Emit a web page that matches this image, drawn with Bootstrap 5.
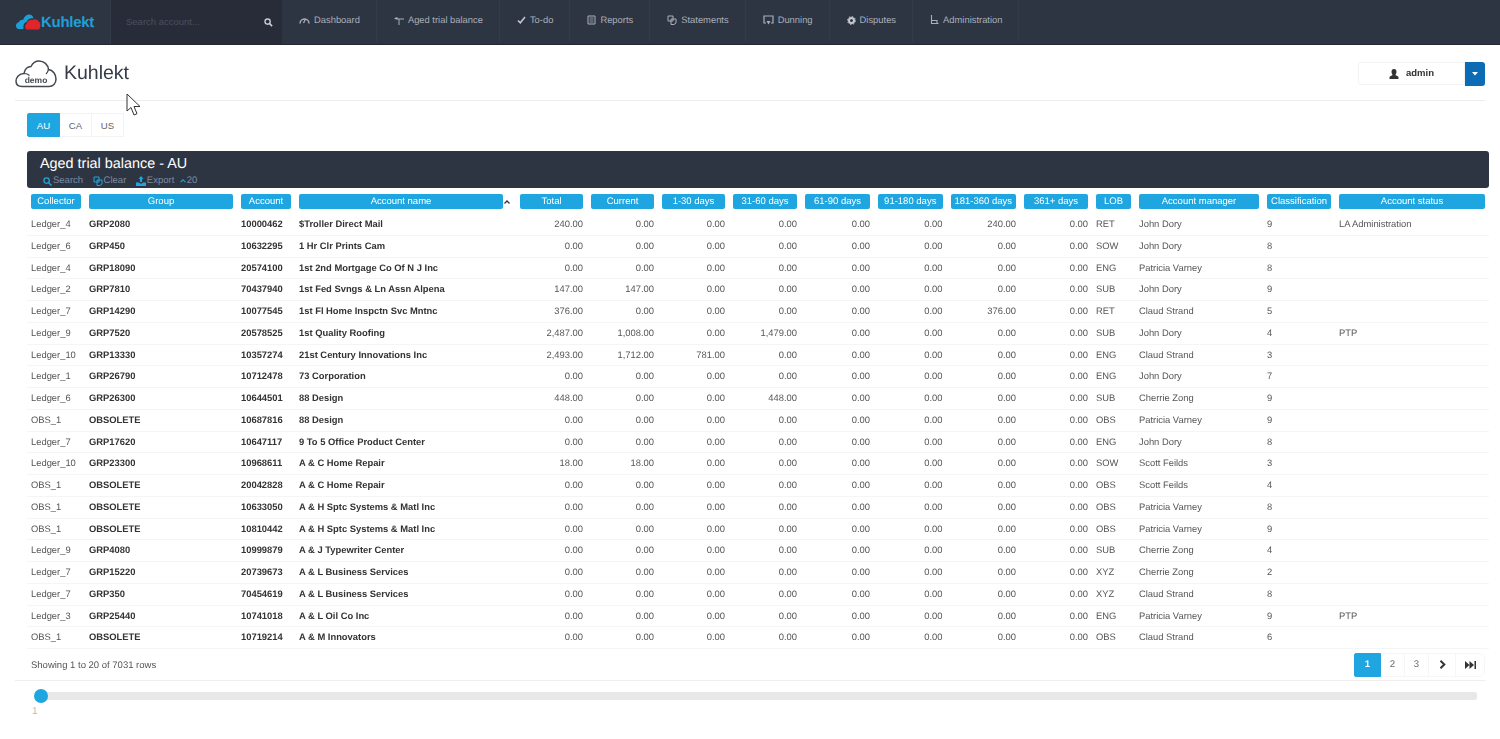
<!DOCTYPE html>
<html lang="en">
<head>
<meta charset="utf-8">
<title>Kuhlekt</title>
<link href="https://cdn.jsdelivr.net/npm/bootstrap@5.3.0/dist/css/bootstrap.min.css" rel="stylesheet">
<style>
html,body{height:739px;overflow:hidden;}
body{font-family:"Liberation Sans",Arial,sans-serif;font-size:9.5px;color:#555;background:#fff;position:relative;text-rendering:geometricPrecision;}
.topbar{height:45px;background:#2e3542;border-bottom:1px solid #23272f;padding:0;flex-wrap:nowrap;justify-content:flex-start;}
.brandcell{width:111px;height:44px;padding-left:16px;border-right:1px solid #343b49;gap:0;}
.brandword{font-size:15px;font-weight:700;color:#1f9fd8;letter-spacing:-.3px;line-height:1;margin-left:0;}
.searchcell{width:171px;height:44px;background:#272c38;padding:0 9px 0 15px;}
.searchcell input{background:transparent;border:0;outline:0;color:#4a505e;font-size:9.5px;width:130px;padding:0;}
.searchcell input::placeholder{color:#4a505e;opacity:1;}
.topnav{height:44px;flex-wrap:nowrap;}
.topnav .nav-link{height:44px;padding:0 16px 0 17px;display:flex;align-items:center;gap:4px;font-size:9.4px;color:#a9afb9;border-right:1px solid #333a48;margin-top:-2px;}
.topnav .nav-link svg{flex:none;}
.pagehead{height:56px;margin:0 15px;padding-top:2px;border-bottom:1px solid #eee;will-change:transform;}
.pagetitle{font-size:19.5px;font-weight:400;color:#333b46;margin:0 0 0 7px;line-height:1;}
.userbox{width:107px;height:23px;border:1px solid #f2f2f2;border-radius:3px 0 0 3px;font-size:9.5px;font-weight:700;color:#333;gap:7px;padding:0;}
.userbox span{padding-top:2px;}
.usercaret{width:20px;height:24px;background:#0b6cb5;border-radius:0 3px 3px 0;padding:0;border:0;}
.tabset{margin:12px 0 0 27px;height:24px;}
.tabset .btn{font-size:9.6px;color:#666;background:#fff;border:1px solid #f3f3f3;padding:0;height:24px;line-height:23px;width:33px;border-radius:0;}
.tabset .btn.active{background:#1fa6e0;color:#fff;border-color:#1fa6e0;width:33px;border-radius:2px 0 0 2px;}
.titlepanel{margin:14px 11px 0 27px;height:37px;background:#2e3542;border-radius:3px;padding:5px 13px 0;}
.titletext{font-size:14.4px;font-weight:400;color:#fff;line-height:17px;margin:0;}
.titlelinks{font-size:9.5px;line-height:12px;color:#7c8ba3;margin-top:2px;padding-left:3px;gap:9.5px;}
.titlelinks span{display:flex;align-items:center;gap:1px;}
.titlelinks .countlink{margin-left:-4px;}
.gridwrap{margin:0 11px 0 27px;will-change:transform;}
.ledger{table-layout:fixed;width:1462px;margin:0;border-collapse:separate;border-spacing:0;font-size:9.4px;--bs-table-color:#555;}
.ledger th{padding:6px 4px 5px;border:0;font-weight:400;position:relative;}
.ledger td{box-sizing:border-box;padding:0 4px;height:21.76px;line-height:20px;border-top:0;border-bottom:1px solid #f5f5f5;white-space:nowrap;overflow:hidden;color:#555;}
.ledger td.strong{font-weight:700;color:#333;}
.ledger td.num{text-align:right;}
.headchip{display:block;background:#1fa6e0;color:#fff;text-align:center;height:15px;line-height:15px;border-radius:2px;font-size:9.5px;white-space:nowrap;overflow:hidden;}
.sortmark{position:absolute;right:6px;top:12px;}
.footrow{margin:0 15px;height:32px;padding:0 0 0 16px;border-bottom:1px solid #eee;will-change:transform;}
.footrow .pagecount{font-size:9.5px;color:#555;padding-top:3px;}
.pagerset{margin:0;}
.pagerset .page-link{height:24px;width:25px;padding:0;line-height:23px;text-align:center;font-size:9.6px;color:#666;border:1px solid #f6f6f6;background:#fff;display:flex;align-items:center;justify-content:center;border-radius:0;}
.pagerset .active .page-link{background:#1fa6e0;color:#fff;border-color:#1fa6e0;font-weight:700;border-radius:2px 0 0 2px;width:27px;}
.pagerset .nextcell .page-link{width:28px;}
.pagerset .wide .page-link{width:30px;}
.slidertrack{margin:11px 23px 0 41px;height:8px;background:#e8e8e8;border-radius:2px;position:relative;}
.sliderthumb{position:absolute;left:-7px;top:-3px;width:14px;height:14px;background:#1fa6e0;border-radius:50%;}
.sliderlabel{margin:6px 0 0 32px;font-size:10px;line-height:12px;color:#bbb;}
.mousepointer{position:absolute;left:126px;top:93px;}
</style>
</head>
<body>
<nav class="navbar topbar d-flex align-items-start">
  <div class="brandcell d-flex align-items-center">
    <svg width="25" height="16" viewBox="0 0 25 16" aria-hidden="true"><path d="M3 15C.5 15 0 12.500 0 11.500 0 9.500 1.500 8.500 3 8.300 3.500 6.300 5.500 5.500 7 6 8 3 10 .5 13 .5c2.500 0 4 1.500 4.500 4-3-.8-6 .8-7 3.500C8.500 8.500 7 10.500 7.500 15z" fill="#1f9fd8"/><path d="M10.500 15.500C8.500 14 8.500 11 10.500 10c.5-3 3.500-5 6-4 2-1.500 5-1 6 1.500 2 1 2.800 5 .5 8z" fill="#e0262b"/></svg>
    <span class="brandword">Kuhlekt</span>
  </div>
  <div class="searchcell d-flex align-items-center justify-content-between">
    <input type="text" placeholder="Search account..." aria-label="Search account">
    <svg width="9" height="9" viewBox="0 0 10 10" aria-hidden="true"><circle cx="4" cy="4" r="2.900" fill="none" stroke="#c9ccd2" stroke-width="1.500"/><path d="M6 6l3 3" stroke="#c9ccd2" stroke-width="1.800"/></svg>
  </div>
  <ul class="nav topnav">
    <li class="nav-item"><a class="nav-link" href="#"><svg width="11" height="8" viewBox="0 0 11 8"><path d="M1 7.500a4.500 4.500 0 0 1 9 0" fill="none" stroke="#a9afb9" stroke-width="1.400"/><path d="M4.500 7l2-4" stroke="#a9afb9" stroke-width="1.200"/></svg>Dashboard</a></li>
    <li class="nav-item"><a class="nav-link" href="#"><svg width="10" height="9" viewBox="0 0 10 9"><path d="M0 2.500L3 1l1 1.500h6v1H5.500V9h-1V3.500H2z" fill="#a9afb9"/></svg>Aged trial balance</a></li>
    <li class="nav-item"><a class="nav-link" href="#"><svg width="9" height="8" viewBox="0 0 9 8"><path d="M1 4.500l2.300 2.300L8 1" fill="none" stroke="#c6cad1" stroke-width="1.500"/></svg>To-do</a></li>
    <li class="nav-item"><a class="nav-link" href="#"><svg width="9" height="10" viewBox="0 0 9 10"><path d="M1 1h7v8H1z" fill="none" stroke="#a9afb9"/><path d="M2.500 3h4M2.500 5h4M2.500 7h4" stroke="#a9afb9" stroke-width=".8"/></svg>Reports</a></li>
    <li class="nav-item"><a class="nav-link" href="#"><svg width="10" height="10" viewBox="0 0 10 10"><path d="M1 1h5v5H1z" fill="none" stroke="#a9afb9"/><path d="M4 4h5v4l-2 1.500H4z" fill="none" stroke="#a9afb9"/></svg>Statements</a></li>
    <li class="nav-item"><a class="nav-link" href="#"><svg width="11" height="10" viewBox="0 0 11 10"><path d="M3 8H1V1h9v7H8" fill="none" stroke="#a9afb9" stroke-width="1.200"/><path d="M5.500 9.500L3.500 6h4z" fill="#a9afb9"/></svg>Dunning</a></li>
    <li class="nav-item"><a class="nav-link" href="#"><svg width="9" height="9" viewBox="0 0 9 9"><circle cx="4.500" cy="4.500" r="2.500" fill="none" stroke="#c6cad1" stroke-width="2"/><circle cx="4.500" cy="4.500" r="4" fill="none" stroke="#c6cad1" stroke-width="1" stroke-dasharray="1.500 1.600"/></svg>Disputes</a></li>
    <li class="nav-item"><a class="nav-link" href="#"><svg width="9" height="10" viewBox="0 0 9 10"><path d="M1.500 0v8.500H8.500M1.500 5.500H7v3" fill="none" stroke="#a9afb9" stroke-width="1.100"/></svg>Administration</a></li>
  </ul>
</nav>

<header class="pagehead d-flex align-items-center justify-content-between">
  <div class="d-flex align-items-center">
    <svg width="42" height="28" viewBox="0 0 42 28" aria-hidden="true"><path d="M7 26.500C3 26.500 1 24 1 21c0-3.500 3-7.500 8-7.500 1-5 4-7 7-7 1.500-3 4.500-5.500 8-5.500 5 0 9 3.500 9.500 8.500C38 10 41 14.500 41 19c0 4.500-3 7.500-7 7.500z" fill="none" stroke="#444a52" stroke-width="1.500"/><path d="M9 13.500c2 0 4 .5 5.500 2M33.500 9.500c-.5 2-1.500 3.500-2.500 4.500" fill="none" stroke="#444a52" stroke-width="1.200"/><text x="21" y="22.500" text-anchor="middle" font-family="Liberation Sans" font-size="8.500" font-weight="700" fill="#444a52">demo</text></svg>
    <h1 class="pagetitle">Kuhlekt</h1>
  </div>
  <div class="d-flex align-items-center">
    <div class="userbox d-flex align-items-center justify-content-center">
      <svg width="10" height="10" viewBox="0 0 10 10"><path d="M5 0c1.700 0 2.500 1.200 2.500 2.800S6.800 5.500 6.300 6c1 .5 3.200 1 3.200 2.500V10H.5V8.500C.5 7 2.700 6.500 3.700 6 3.200 5.500 2.500 4.400 2.500 2.800S3.300 0 5 0z" fill="#333"/></svg>
      <span>admin</span>
    </div>
    <button class="usercaret d-flex align-items-center justify-content-center" type="button" aria-label="User menu"><svg width="6" height="4" viewBox="0 0 6 4"><path d="M0 0h6L3 3.500z" fill="#fff"/></svg></button>
  </div>
</header>

<svg class="mousepointer" width="16" height="25" viewBox="0 0 16 25" aria-hidden="true"><path d="M1 1v17l4-3.500 3 7.500 3-1.300-3-7.200h6z" fill="#fff" stroke="#333" stroke-width="1"/></svg>

<div class="btn-group tabset d-inline-flex" role="group">
  <button class="btn active" type="button">AU</button>
  <button class="btn" type="button">CA</button>
  <button class="btn" type="button">US</button>
</div>

<section class="titlepanel">
  <h2 class="titletext">Aged trial balance - AU</h2>
  <div class="titlelinks d-flex">
    <span><svg width="9" height="9" viewBox="0 0 10 10"><circle cx="4" cy="4" r="3" fill="none" stroke="#1fa6e0" stroke-width="1.400"/><path d="M6 6l3.500 3.500" stroke="#1fa6e0" stroke-width="1.600"/></svg>Search</span>
    <span><svg width="10" height="10" viewBox="0 0 10 10"><path d="M1 1h5v5H1z" fill="none" stroke="#1fa6e0"/><path d="M4 4h5v4l-2 1.500H4z" fill="none" stroke="#1fa6e0"/></svg>Clear</span>
    <span><svg width="10" height="10" viewBox="0 0 10 10"><path d="M5 0l2.500 3H6v3H4V3H2.500z" fill="#1fa6e0"/><path d="M0 6.500h3l1 1h2l1-1h3V10H0z" fill="#1fa6e0"/></svg>Export</span>
    <span class="countlink"><svg width="6" height="4" viewBox="0 0 7 5"><path d="M3.500 0L7 3.500 6 4.500 3.500 2 1 4.500 0 3.500z" fill="#1fa6e0"/></svg>20</span>
  </div>
</section>

<div class="gridwrap">
  <table class="table ledger">
    <colgroup>
      <col style="width:58px"><col style="width:152px"><col style="width:58px"><col style="width:221px"><col style="width:71px"><col style="width:71px"><col style="width:71px"><col style="width:72px"><col style="width:73px"><col style="width:72.5px"><col style="width:73.5px"><col style="width:72px"><col style="width:43px"><col style="width:128px"><col style="width:72px"><col style="width:154px">
    </colgroup>
    <thead><tr id="headrow"></tr></thead>
    <tbody id="rowsbody"></tbody>
  </table>
</div>

<div class="footrow d-flex align-items-center justify-content-between">
  <span class="pagecount">Showing 1 to 20 of 7031 rows</span>
  <ul class="pagination pagerset">
    <li class="page-item active"><a class="page-link" href="#">1</a></li>
    <li class="page-item"><a class="page-link" href="#">2</a></li>
    <li class="page-item"><a class="page-link" href="#">3</a></li>
    <li class="page-item nextcell"><a class="page-link" href="#" aria-label="Next"><svg width="7" height="9" viewBox="0 0 7 9"><path d="M1.500.8L5.300 4.500 1.500 8.200" fill="none" stroke="#333" stroke-width="2"/></svg></a></li>
    <li class="page-item wide"><a class="page-link" href="#" aria-label="Last"><svg width="11" height="8" viewBox="0 0 11 8"><path d="M0 0l4.500 4L0 8zM4.500 0L9 4 4.500 8z" fill="#333"/><path d="M9.500 0h1.500v8H9.500z" fill="#333"/></svg></a></li>
  </ul>
</div>

<div class="slidertrack"><div class="sliderthumb"></div></div>
<div class="sliderlabel">1</div>

<script>
var heads=["Collector","Group","Account","Account name","Total","Current","1-30 days","31-60 days","61-90 days","91-180 days","181-360 days","361+ days","LOB","Account manager","Classification","Account status"];
var rows=[
["Ledger_4","GRP2080","10000462","$Troller Direct Mail",{0:"240.00",6:"240.00"},"RET","John Dory","9","LA Administration"],
["Ledger_6","GRP450","10632295","1 Hr Clr Prints Cam",{},"SOW","John Dory","8",""],
["Ledger_4","GRP18090","20574100","1st 2nd Mortgage Co Of N J Inc",{},"ENG","Patricia Varney","8",""],
["Ledger_2","GRP7810","70437940","1st Fed Svngs & Ln Assn Alpena",{0:"147.00",1:"147.00"},"SUB","John Dory","9",""],
["Ledger_7","GRP14290","10077545","1st Fl Home Inspctn Svc Mntnc",{0:"376.00",6:"376.00"},"RET","Claud Strand","5",""],
["Ledger_9","GRP7520","20578525","1st Quality Roofing",{0:"2,487.00",1:"1,008.00",3:"1,479.00"},"SUB","John Dory","4","PTP"],
["Ledger_10","GRP13330","10357274","21st Century Innovations Inc",{0:"2,493.00",1:"1,712.00",2:"781.00"},"ENG","Claud Strand","3",""],
["Ledger_1","GRP26790","10712478","73 Corporation",{},"ENG","John Dory","7",""],
["Ledger_6","GRP26300","10644501","88 Design",{0:"448.00",3:"448.00"},"SUB","Cherrie Zong","9",""],
["OBS_1","OBSOLETE","10687816","88 Design",{},"OBS","Patricia Varney","9",""],
["Ledger_7","GRP17620","10647117","9 To 5 Office Product Center",{},"ENG","John Dory","8",""],
["Ledger_10","GRP23300","10968611","A & C Home Repair",{0:"18.00",1:"18.00"},"SOW","Scott Feilds","3",""],
["OBS_1","OBSOLETE","20042828","A & C Home Repair",{},"OBS","Scott Feilds","4",""],
["OBS_1","OBSOLETE","10633050","A & H Sptc Systems & Matl Inc",{},"OBS","Patricia Varney","8",""],
["OBS_1","OBSOLETE","10810442","A & H Sptc Systems & Matl Inc",{},"OBS","Patricia Varney","9",""],
["Ledger_9","GRP4080","10999879","A & J Typewriter Center",{},"SUB","Cherrie Zong","4",""],
["Ledger_7","GRP15220","20739673","A & L Business Services",{},"XYZ","Cherrie Zong","2",""],
["Ledger_7","GRP350","70454619","A & L Business Services",{},"XYZ","Claud Strand","8",""],
["Ledger_3","GRP25440","10741018","A & L Oil Co Inc",{},"ENG","Patricia Varney","9","PTP"],
["OBS_1","OBSOLETE","10719214","A & M Innovators",{},"OBS","Claud Strand","6",""]
];
var headRow=document.getElementById("headrow");
heads.forEach(function(h,i){
  var th=document.createElement("th");
  var chip=document.createElement("span");
  chip.className="headchip";
  chip.textContent=h;
  th.appendChild(chip);
  if(i===3){
    chip.style.width="204px";
    th.insertAdjacentHTML("beforeend",'<svg class="sortmark" width="6" height="4" viewBox="0 0 6 4"><path d="M.5 3.500L3 1l2.500 2.500" fill="none" stroke="#333" stroke-width="1.300"/></svg>');
  }
  headRow.appendChild(th);
});
var body=document.getElementById("rowsbody");
rows.forEach(function(r){
  var tr=document.createElement("tr");
  function cell(text,cls){var td=document.createElement("td");td.textContent=text;if(cls)td.className=cls;tr.appendChild(td);}
  cell(r[0]);cell(r[1],"strong");cell(r[2],"strong");cell(r[3],"strong");
  for(var i=0;i<8;i++){cell(r[4][i]||"0.00","num");}
  cell(r[5]);cell(r[6]);cell(r[7]);cell(r[8]);
  body.appendChild(tr);
});
</script>
<script src="https://cdn.jsdelivr.net/npm/bootstrap@5.3.0/dist/js/bootstrap.bundle.min.js"></script>
</body>
</html>
